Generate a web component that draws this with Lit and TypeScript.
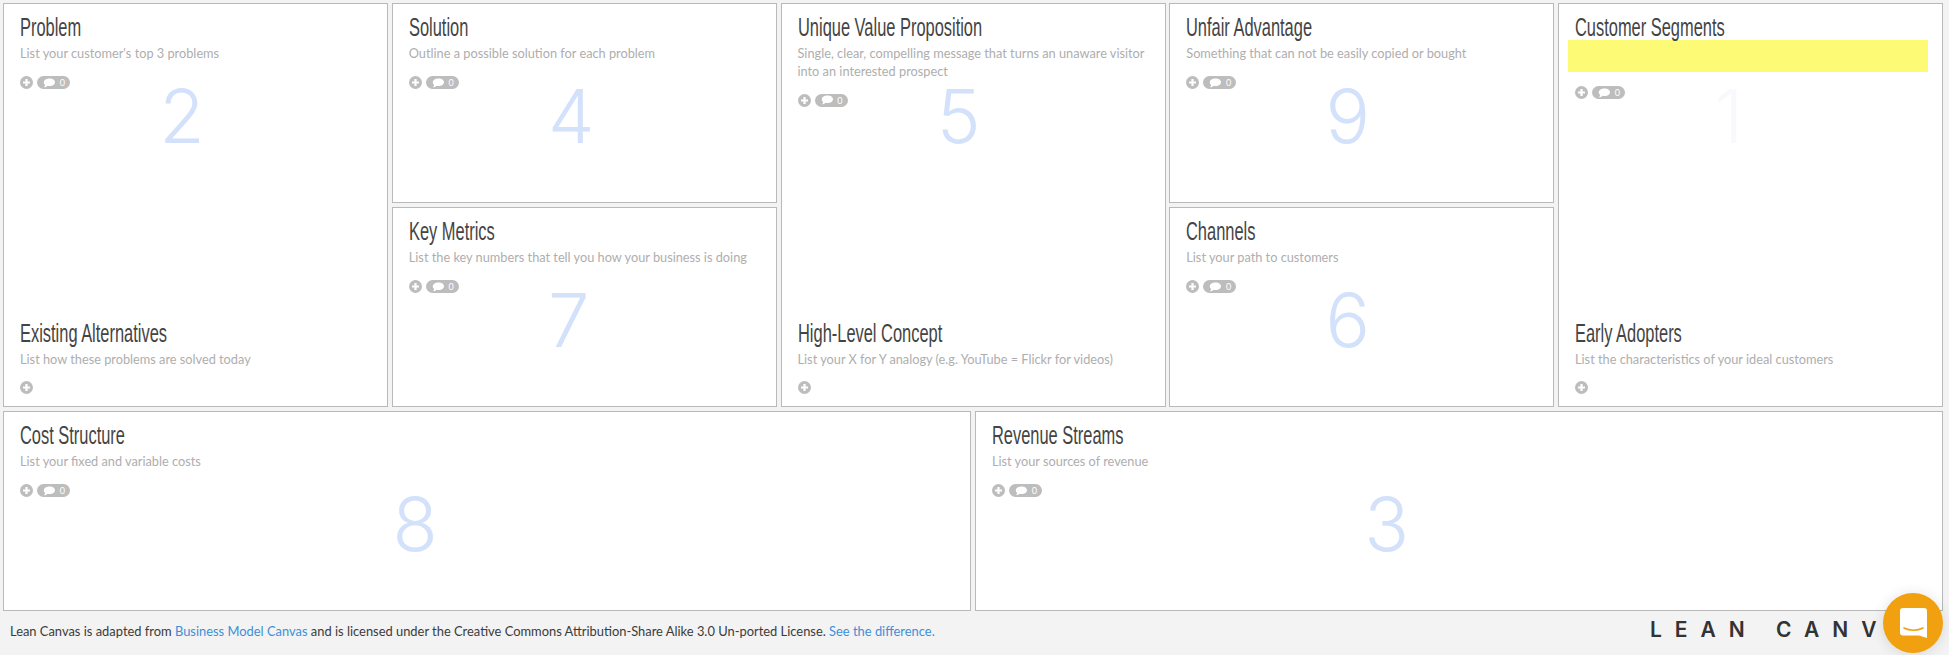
import { LitElement, html, css } from "lit";
import { customElement } from "lit/decorators.js";

interface Sec { t: string; h: string; }

@customElement("app-root")
export class AppRoot extends LitElement {
  static styles = css`
    :host { display: block; width: 1949px; height: 655px; background: #f3f3f3; overflow: hidden; position: relative; font-family: Lato, "Open Sans", sans-serif; }
    .grid { display: grid; grid-template-columns: repeat(10, 1fr); grid-template-rows: repeat(3, 200.25px); gap: 3.75px; padding: 3px 6px 0 3px; box-sizing: border-box; width: 1949px; height: 611px; }
    .cell { background: #fff; border: 1px solid #b9b9b9; display: flex; flex-direction: column; justify-content: space-between; position: relative; min-width: 0; }
    .tall { grid-row: 1 / span 2; grid-column: span 2; }
    .short { grid-column: span 2; }
    .wide { grid-column: span 5; }
    .r1 { grid-row: 1; }
    .r2 { grid-row: 2; }
    .r3 { grid-row: 3; }
    .sec { padding: 8px 16px 0; position: relative; z-index: 1; }
    .sec.low { padding-bottom: 12px; }
    h2 { margin: 0; font: 400 25px/30px "Liberation Sans", sans-serif; color: #444; transform: scaleX(.657); transform-origin: left center; white-space: nowrap; }
    p { margin: 3px 0 0; font-size: 12.75px; line-height: 17.5px; color: #aeaeae; }
    .hl { margin: -2px -2px 0 -7px; height: 32px; background: #fdfb76; }
    .tools { display: flex; align-items: center; gap: 4px; margin-top: 13.5px; height: 13px; }
    .low .tools { margin-top: 12.5px; }
    .hl + .tools { margin-top: 14px; }
    .plus { width: 13px; height: 13px; display: block; }
    .bubble { width: 33px; height: 13px; border-radius: 7px; background: #bdbdbd; display: flex; align-items: center; padding: 0 5px 0 6px; box-sizing: border-box; color: #fff; font-size: 9px; }
    .bubble svg { width: 12px; height: 10px; display: block; margin-right: auto; }
    .num { position: absolute; left: 40%; margin-left: 2px; top: 67px; font-family: Inter, Lato, sans-serif; font-size: 74px; line-height: 90px; color: #d3e1fb; font-weight: 300; }
    .num.c { color: #f8f9fc; }
    footer { height: 43px; display: flex; align-items: center; padding: 0 0 4px 10px; box-sizing: border-box; font-size: 12.9px; color: #3b3b3b; }
    footer a { color: #3e8fd8; text-decoration: none; }
    .logo { font-family: Inter, Lato, sans-serif; font-size: 21px; line-height: 26px; font-weight: 600; letter-spacing: 13px; color: #333; white-space: pre; position: absolute; left: 1650px; top: 617px; }
    .chat { position: absolute; left: 1883px; top: 593px; width: 60px; height: 60px; border-radius: 50%; background: #f1a00f; box-shadow: 0 1px 14px rgba(0,0,0,.12); display: flex; align-items: center; justify-content: center; z-index: 3; }
    .chat svg { width: 27px; height: 30px; display: block; }
  `;

  tools(comments = true) {
    return html`<div class="tools">
      <svg class="plus" viewBox="0 0 13 13"><circle cx="6.5" cy="6.5" r="6.5" fill="#bdbdbd"/><path d="M6.5 3v7M3 6.5h7" stroke="#fff" stroke-width="2.2"/></svg>
      ${comments ? html`<div class="bubble"><svg viewBox="0 0 12 10"><path d="M6.5.5C9.500.5 12 2 12 4.300S9.500 8 6.500 8c-.6 0-1.200 0-1.800-.2C3.500 8.900 2 9.300.8 9.300c.8-.7 1.300-1.500 1.400-2.300C1 6.300.8 5.300.8 4.300.8 2 3.500.5 6.500.5z" fill="#fff"/></svg>0</div>` : ""}
    </div>`;
  }

  sec(s: Sec) {
    return html`<div class="sec">
      <h2>${s.t}</h2>
      ${s.h ? html`<p>${s.h}</p>` : html`<div class="hl"></div>`}
      ${this.tools()}
    </div>`;
  }

  low(t: string, h: string) {
    return html`<div class="sec low"><h2>${t}</h2><p>${h}</p>${this.tools(false)}</div>`;
  }

  render() {
    return html`
      <div class="grid">
        <div class="cell tall">
          ${this.sec({ t: "Problem", h: "List your customer's top 3 problems" })}
          <div class="num">2</div>
          ${this.low("Existing Alternatives", "List how these problems are solved today")}
        </div>
        <div class="cell short r1">
          ${this.sec({ t: "Solution", h: "Outline a possible solution for each problem" })}
          <div class="num">4</div>
        </div>
        <div class="cell tall">
          ${this.sec({ t: "Unique Value Proposition", h: "Single, clear, compelling message that turns an unaware visitor into an interested prospect" })}
          <div class="num">5</div>
          ${this.low("High-Level Concept", "List your X for Y analogy (e.g. YouTube = Flickr for videos)")}
        </div>
        <div class="cell short r1">
          ${this.sec({ t: "Unfair Advantage", h: "Something that can not be easily copied or bought" })}
          <div class="num">9</div>
        </div>
        <div class="cell tall">
          ${this.sec({ t: "Customer Segments", h: "" })}
          <div class="num c">1</div>
          ${this.low("Early Adopters", "List the characteristics of your ideal customers")}
        </div>
        <div class="cell short r2" style="grid-column:3 / span 2">
          ${this.sec({ t: "Key Metrics", h: "List the key numbers that tell you how your business is doing" })}
          <div class="num">7</div>
        </div>
        <div class="cell short r2" style="grid-column:7 / span 2">
          ${this.sec({ t: "Channels", h: "List your path to customers" })}
          <div class="num">6</div>
        </div>
        <div class="cell wide r3">
          ${this.sec({ t: "Cost Structure", h: "List your fixed and variable costs" })}
          <div class="num">8</div>
        </div>
        <div class="cell wide r3">
          ${this.sec({ t: "Revenue Streams", h: "List your sources of revenue" })}
          <div class="num">3</div>
        </div>
      </div>
      <footer>
        <span>Lean Canvas is adapted from <a>Business Model Canvas</a> and is licensed under the Creative Commons Attribution-Share Alike 3.0 Un-ported License. <a>See the difference.</a></span>
      </footer>
      <div class="logo">LEAN CANV</div>
      <div class="chat"><svg viewBox="0 0 27 30"><path d="M3 0h21a3 3 0 0 1 3 3v27l-8-2.500H3a3 3 0 0 1-3-3V3a3 3 0 0 1 3-3z" fill="#fff"/><path d="M4 20c5.500 3 13.500 3 19 0" fill="none" stroke="#f1a00f" stroke-width="1.600" stroke-linecap="round"/></svg></div>
    `;
  }
}
